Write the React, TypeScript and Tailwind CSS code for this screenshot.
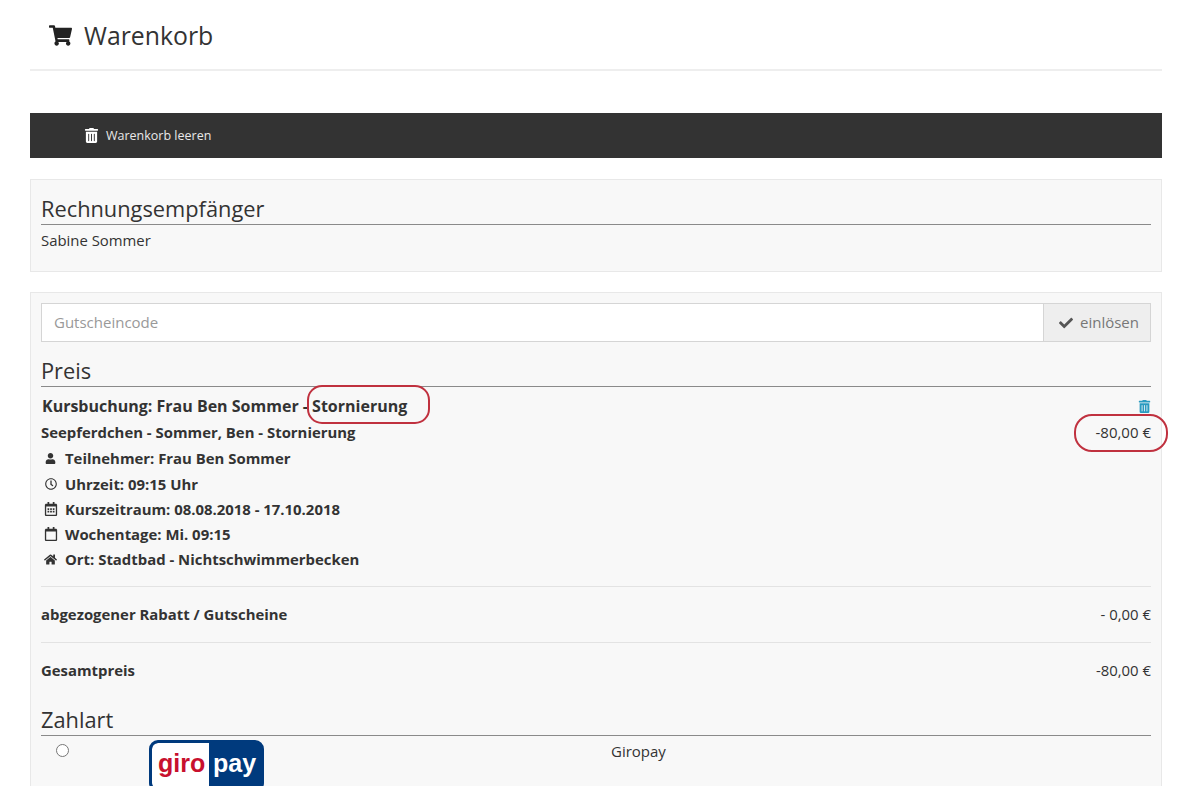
import { FaCheck, FaHome, FaRegCalendar, FaRegCalendarAlt, FaRegClock, FaShoppingCart, FaTrashAlt, FaUser } from "react-icons/fa";

const details = [
  { icon: <FaUser size={11} />, label: "Teilnehmer: Frau Ben Sommer" },
  { icon: <FaRegClock size={12} />, label: "Uhrzeit: 09:15 Uhr" },
  { icon: <FaRegCalendarAlt size={14} />, label: "Kurszeitraum: 08.08.2018 - 17.10.2018" },
  { icon: <FaRegCalendar size={14} />, label: "Wochentage: Mi. 09:15" },
  { icon: <FaHome size={13} />, label: "Ort: Stadtbad - Nichtschwimmerbecken" },
];

function SectionTitle({ children }: { children: string }) {
  return (
    <div className="text-[21.8px] leading-[30px] text-[#333] border-b border-[#8a8a8a] h-[31px]">
      {children}
    </div>
  );
}

export default function App() {
  return (
    <div className="h-[786px] overflow-hidden bg-white pl-[30px] pr-[38px] text-[#333] font-['Open_Sans',sans-serif]">
      <div className="h-[71px] border-b-2 border-[#eeeeee] pl-[19px] pt-[19px] flex items-start gap-[12px]">
        <FaShoppingCart size={23} className="text-[#222] mt-[5px]" />
        <span className="text-[24.8px] leading-[33px] text-[#333]">Warenkorb</span>
      </div>

      <div className="mt-[42px] h-[45px] bg-[#333333] flex items-center pl-[54px] gap-[7px] text-white">
        <FaTrashAlt size={15} />
        <span className="text-[12.5px] leading-[20px] pt-[1px] text-[#e8e8e8]">Warenkorb leeren</span>
      </div>

      <div className="mt-[21px] h-[93px] bg-[#f8f8f8] border border-[#e8e8e8] px-[10px] pt-[14px]">
        <SectionTitle>Rechnungsempfänger</SectionTitle>
        <div className="text-[14.9px] leading-[20px] mt-[5px]">Sabine Sommer</div>
      </div>

      <div className="mt-[20px] bg-[#f8f8f8] border border-[#e8e8e8] px-[10px] pt-[10px] h-[600px]">
        <div className="flex h-[39px]">
          <div className="flex-1 bg-white border border-[#d5d5d5] flex items-center pl-[12px] text-[15px] text-[#999]">
            Gutscheincode
          </div>
          <div className="w-[107px] bg-[#eeeeee] border border-l-0 border-[#d5d5d5] flex items-center pl-[15px] gap-[7px] text-[15px] text-[#777]">
            <FaCheck size={14} className="text-[#555]" />
            <span>einlösen</span>
          </div>
        </div>

        <div className="mt-[14px]">
          <SectionTitle>Preis</SectionTitle>
        </div>

        <div className="relative pt-[8px]">
          <div className="flex justify-between items-center h-[22px]">
            <span className="text-[16px] font-bold pl-[1px]">Kursbuchung: Frau Ben Sommer - Stornierung</span>
            <FaTrashAlt size={13} className="text-[#2a9bc0] mt-[1px]" />
          </div>
          <div className="flex justify-between items-center mt-[4px] h-[22px]">
            <span className="text-[14.9px] font-bold">Seepferdchen - Sommer, Ben - Stornierung</span>
            <span className="text-[15px]">-80,00 €</span>
          </div>
          <div className="mt-[3px]">
            {details.map((d) => (
              <div key={d.label} className="flex items-center h-[25.25px] text-[14.9px] font-bold">
                <span className="w-[24px] flex justify-center pr-[5px] text-[#333]">{d.icon}</span>
                <span>{d.label}</span>
              </div>
            ))}
          </div>
          <div className="absolute left-[266px] top-[-2px] w-[123px] h-[39px] rounded-[15px] border-2 border-[#c0313f]" />
          <div className="absolute left-[1033px] top-[27px] w-[94px] h-[38px] rounded-[18px] border-2 border-[#c0313f]" />
        </div>

        <div className="mt-[14px] border-t border-[#e3e3e3] h-[56px] pb-[2px] flex justify-between items-center text-[14.9px]">
          <span className="font-bold">abgezogener Rabatt / Gutscheine</span>
          <span>- 0,00 €</span>
        </div>
        <div className="border-t border-[#e3e3e3] h-[57px] pb-[2px] flex justify-between items-center text-[14.9px]">
          <span className="font-bold">Gesamtpreis</span>
          <span>-80,00 €</span>
        </div>

        <div className="mt-[6px]">
          <SectionTitle>Zahlart</SectionTitle>
        </div>
        <div className="relative flex h-[60px] text-[15px]">
          <div className="w-[108px] pl-[15px] pt-[8px]">
            <div className="size-[13px] rounded-full border border-[#777] bg-white" />
          </div>
          <div className="mt-[4px] w-[115px] h-[52px] rounded-[9px] bg-[#003a7d] border-[3px] border-[#003a7d] flex overflow-hidden">
            <div className="w-[57px] bg-white rounded-l-[6px] pl-[6px] pt-[5px] text-[25px] leading-[30px] font-bold text-[#c8102e] font-['Liberation_Sans',sans-serif]">
              giro
            </div>
            <div className="flex-1 pl-[4px] pt-[5px] text-[25px] leading-[30px] font-bold text-white font-['Liberation_Sans',sans-serif]">
              pay
            </div>
          </div>
          <div className="ml-[347px] pt-[4px]">Giropay</div>
        </div>
      </div>
    </div>
  );
}
